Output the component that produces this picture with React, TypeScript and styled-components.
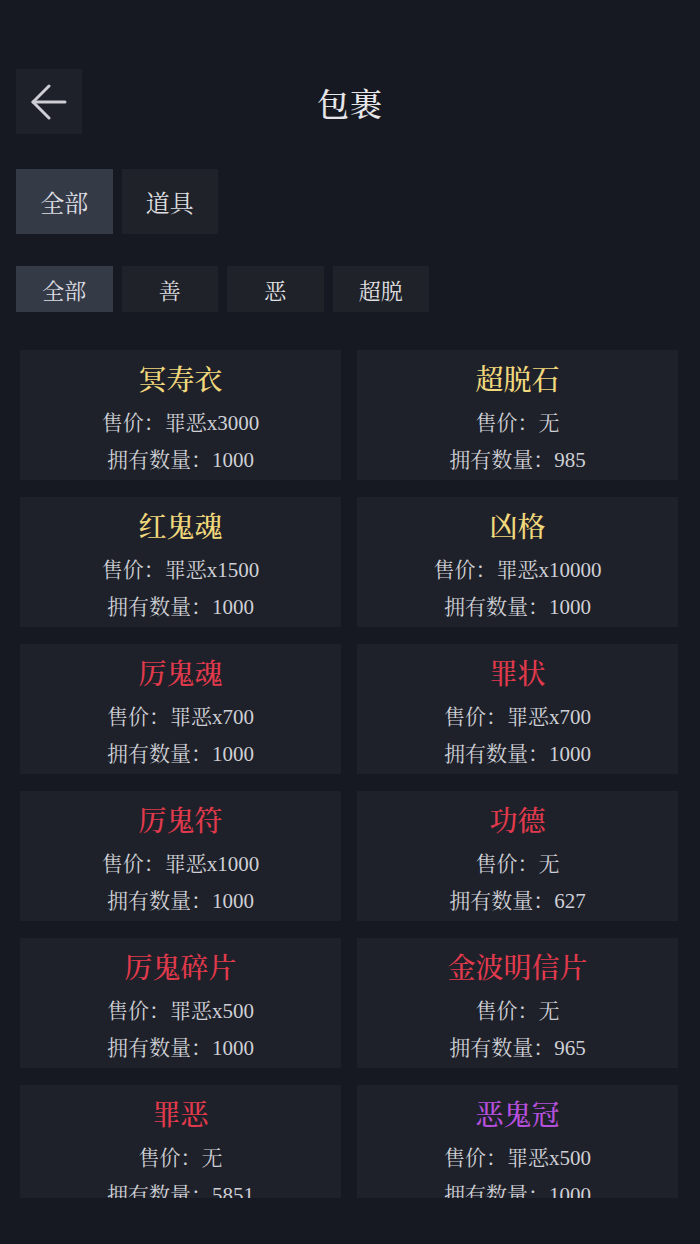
import React from 'react'
import styled, { createGlobalStyle } from 'styled-components'

const GlobalStyle = createGlobalStyle`
  html, body {
    margin: 0;
    padding: 0;
    background: #161921;
  }
  body {
    font-family: "Liberation Serif", "Noto Serif CJK SC", "Noto Sans CJK SC", serif;
    color: #d4d5da;
  }
`

type Tone = 'gold' | 'red' | 'purple'

const toneColor: Record<Tone, string> = {
  gold: '#f1d87c',
  red: '#e23a4d',
  purple: '#b650dc',
}

const items: { name: string; price: string; count: number; tone: Tone }[] = [
  { name: '冥寿衣', price: '罪恶x3000', count: 1000, tone: 'gold' },
  { name: '超脱石', price: '无', count: 985, tone: 'gold' },
  { name: '红鬼魂', price: '罪恶x1500', count: 1000, tone: 'gold' },
  { name: '凶格', price: '罪恶x10000', count: 1000, tone: 'gold' },
  { name: '厉鬼魂', price: '罪恶x700', count: 1000, tone: 'red' },
  { name: '罪状', price: '罪恶x700', count: 1000, tone: 'red' },
  { name: '厉鬼符', price: '罪恶x1000', count: 1000, tone: 'red' },
  { name: '功德', price: '无', count: 627, tone: 'red' },
  { name: '厉鬼碎片', price: '罪恶x500', count: 1000, tone: 'red' },
  { name: '金波明信片', price: '无', count: 965, tone: 'red' },
  { name: '罪恶', price: '无', count: 5851, tone: 'red' },
  { name: '恶鬼冠', price: '罪恶x500', count: 1000, tone: 'purple' },
]

const Page = styled.div`
  width: 700px;
  height: 1244px;
  overflow: hidden;
  display: flex;
  flex-direction: column;
  padding-top: 69px;
  box-sizing: border-box;
`

const Header = styled.div`
  position: relative;
  height: 65px;
  display: flex;
  align-items: center;
  justify-content: center;
  padding: 0 16px;
`

const BackButton = styled.button`
  position: absolute;
  left: 16px;
  top: 0;
  width: 66px;
  height: 65px;
  border: none;
  background: #1e2129;
  color: #cdced4;
  display: flex;
  align-items: center;
  justify-content: center;
  padding: 0;
`

const Title = styled.h1`
  margin: 0;
  font-size: 32px;
  font-weight: 500;
  color: #e6e6ea;
  letter-spacing: 1px;
`

const TabRow = styled.div<{ $top: number }>`
  display: flex;
  gap: 9px;
  padding: 0 16px;
  margin-top: ${(p) => p.$top}px;
`

const Tab = styled.div<{ $active?: boolean; $h: number; $size: number }>`
  width: 96.5px;
  height: ${(p) => p.$h}px;
  display: flex;
  align-items: center;
  justify-content: center;
  background: ${(p) => (p.$active ? '#353a47' : '#1f2229')};
  color: ${(p) => (p.$active ? '#dcdde2' : '#e0e0e4')};
  font-size: ${(p) => p.$size}px;
`

const Grid = styled.div`
  margin-top: 38px;
  padding: 0 22px 0 20px;
  height: 848px;
  overflow: hidden;
  display: grid;
  grid-template-columns: 321px 321px;
  column-gap: 16px;
  row-gap: 17px;
  align-content: start;
`

const Card = styled.div`
  height: 130px;
  background: #1e2129;
  display: flex;
  flex-direction: column;
  align-items: center;
  padding-top: 13px;
  box-sizing: border-box;
`

const Name = styled.div<{ $tone: Tone }>`
  font-size: 28px;
  line-height: 36px;
  font-weight: 500;
  color: ${(p) => toneColor[p.$tone]};
  margin-bottom: 6px;
`

const Line = styled.div`
  font-size: 21px;
  line-height: 37px;
  color: #cfd0d6;
`

const BackArrow = () => (
  <svg width="36" height="36" viewBox="0 0 36 36" fill="none" stroke="currentColor" strokeWidth="3" strokeLinecap="round" strokeLinejoin="round">
    <path d="M34 18H2" />
    <path d="M18 2L2 18L18 34" />
  </svg>
)

export default function App() {
  return (
    <>
      <GlobalStyle />
      <Page>
        <Header>
          <BackButton aria-label="返回">
            <BackArrow />
          </BackButton>
          <Title>包裹</Title>
        </Header>
        <TabRow $top={35}>
          <Tab $active $h={65} $size={24}>全部</Tab>
          <Tab $h={65} $size={24}>道具</Tab>
        </TabRow>
        <TabRow $top={32}>
          <Tab $active $h={46} $size={22}>全部</Tab>
          <Tab $h={46} $size={22}>善</Tab>
          <Tab $h={46} $size={22}>恶</Tab>
          <Tab $h={46} $size={22}>超脱</Tab>
        </TabRow>
        <Grid>
          {items.map((it) => (
            <Card key={it.name}>
              <Name $tone={it.tone}>{it.name}</Name>
              <Line>售价：{it.price}</Line>
              <Line>拥有数量：{it.count}</Line>
            </Card>
          ))}
        </Grid>
      </Page>
    </>
  )
}
